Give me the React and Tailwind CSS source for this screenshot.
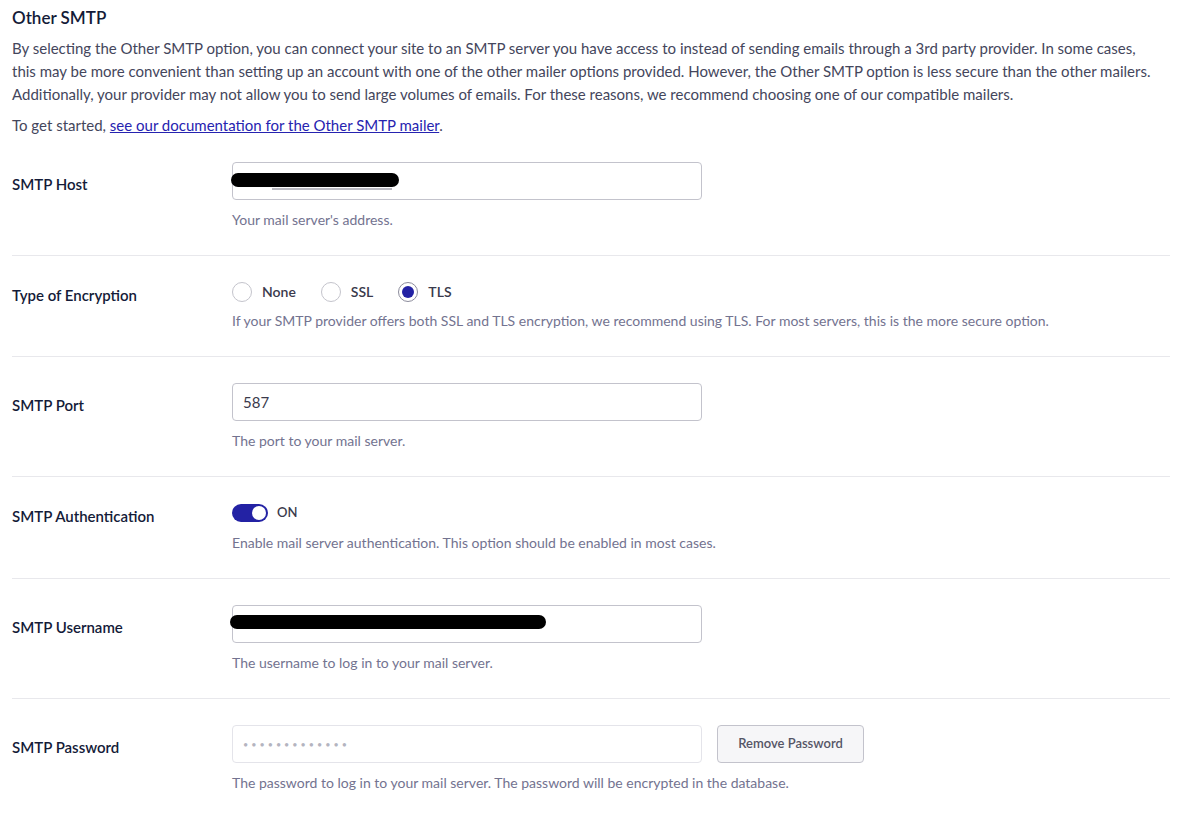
import { useState } from 'react';

const Row = ({ label, controlH = 'h-[38px]', children, help, last, first }) => (
  <div
    className={`flex ${first ? 'pt-[25px]' : 'pt-[26px]'} pb-[25px] ${last ? '' : 'border-b border-[#e8e8ec]'}`}
  >
    <div className={`w-[220px] shrink-0 flex items-center pt-[7px] ${controlH}`}>
      <span className="text-[15px] font-semibold text-[#141b38]">{label}</span>
    </div>
    <div className="flex-1">
      {children}
      <p className="mt-[10px] text-[14px] leading-[20px] text-[#737390]">{help}</p>
    </div>
  </div>
);

const Radio = ({ label, checked, onClick }) => (
  <label className="flex items-center cursor-pointer" onClick={onClick}>
    <span
      className={`w-[20px] h-[20px] rounded-full border flex items-center justify-center bg-white ${
        checked ? 'border-[#8c8c9c]' : 'border-[#c4c4cc]'
      }`}
    >
      {checked && <span className="w-[12px] h-[12px] rounded-full bg-[#2322a4]" />}
    </span>
    <span className="ml-[10px] text-[14px] font-semibold text-[#3a3a4c]">{label}</span>
  </label>
);

const App = () => {
  const [enc, setEnc] = useState('tls');
  const [auth, setAuth] = useState(true);

  return (
    <div className="min-h-screen bg-white pl-[12px] pr-[22px] pt-[6px] font-['Lato',sans-serif]">
      <h2 className="text-[17px] leading-[24px] font-semibold text-[#141b38]">Other SMTP</h2>

      <p className="mt-[7px] text-[15px] leading-[23px] text-[#44465c]">
        By selecting the Other SMTP option, you can connect your site to an SMTP server you have access to instead of sending emails through a 3rd party provider. In some cases,
        <br />
        this may be more convenient than setting up an account with one of the other mailer options provided. However, the Other SMTP option is less secure than the other mailers.
        <br />
        Additionally, your provider may not allow you to send large volumes of emails. For these reasons, we recommend choosing one of our compatible mailers.
      </p>
      <p className="mt-[8px] text-[15px] leading-[23px] text-[#44465c]">
        To get started,{' '}
        <a href="#" className="text-[#2623b0] underline">
          see our documentation for the Other SMTP mailer
        </a>
        .
      </p>

      <div>
        <Row first label="SMTP Host" help="Your mail server's address.">
          <div className="relative w-[470px]">
            <input
              type="text"
              defaultValue=""
              className="w-full h-[38px] rounded-[4px] border border-[#c3c3cc] px-[10px] text-[15px] text-[#444] outline-none"
            />
            <span className="absolute left-[40px] top-[26px] w-[120px] h-[2px] bg-[#b8b8c0]" />
            <span className="absolute left-[-1px] top-[11px] w-[168px] h-[14px] rounded-full bg-black" />
          </div>
        </Row>

        <Row
          label="Type of Encryption"
          controlH="h-[19px]"
          help="If your SMTP provider offers both SSL and TLS encryption, we recommend using TLS. For most servers, this is the more secure option."
        >
          <div className="flex items-center h-[19px] gap-[25px]">
            <Radio label="None" checked={enc === 'none'} onClick={() => setEnc('none')} />
            <Radio label="SSL" checked={enc === 'ssl'} onClick={() => setEnc('ssl')} />
            <Radio label="TLS" checked={enc === 'tls'} onClick={() => setEnc('tls')} />
          </div>
        </Row>

        <Row label="SMTP Port" help="The port to your mail server.">
          <input
            type="text"
            defaultValue="587"
            className="w-[470px] h-[38px] rounded-[4px] border border-[#c3c3cc] px-[10px] text-[15px] text-[#3a3a4c] outline-none"
          />
        </Row>

        <Row
          label="SMTP Authentication"
          controlH="h-[20px]"
          help="Enable mail server authentication. This option should be enabled in most cases."
        >
          <div className="flex items-center h-[20px]">
            <button
              type="button"
              onClick={() => setAuth(!auth)}
              className={`relative w-[36px] h-[18px] rounded-full ${auth ? 'bg-[#2322a4]' : 'bg-[#c4c4cc]'}`}
            >
              <span
                className={`absolute top-[2px] w-[14px] h-[14px] rounded-full bg-white ${auth ? 'left-[20px]' : 'left-[2px]'}`}
              />
            </button>
            <span className="ml-[9px] text-[13px] font-semibold text-[#3a3a4c]">{auth ? 'ON' : 'OFF'}</span>
          </div>
        </Row>

        <Row label="SMTP Username" help="The username to log in to your mail server.">
          <div className="relative w-[470px]">
            <input
              type="text"
              defaultValue=""
              className="w-full h-[38px] rounded-[4px] border border-[#c3c3cc] px-[10px] text-[15px] text-[#444] outline-none"
            />
            <span className="absolute left-[-2px] top-[10px] w-[316px] h-[14px] rounded-full bg-black" />
          </div>
        </Row>

        <Row
          label="SMTP Password"
          last
          help="The password to log in to your mail server. The password will be encrypted in the database."
        >
          <div className="flex items-center gap-[15px]">
            <input
              type="password"
              disabled
              placeholder="•••••••••••••"
              className="w-[470px] h-[38px] rounded-[4px] border border-[#e4e4ea] bg-white px-[10px] text-[9px] tracking-[3px] placeholder:text-[#b4b4c0] outline-none"
            />
            <button
              type="button"
              className="w-[147px] h-[38px] rounded-[4px] border border-[#c3c3cc] bg-[#f6f6f8] text-[13px] font-semibold text-[#555566]"
            >
              Remove Password
            </button>
          </div>
        </Row>
      </div>
    </div>
  );
};

export default App;
